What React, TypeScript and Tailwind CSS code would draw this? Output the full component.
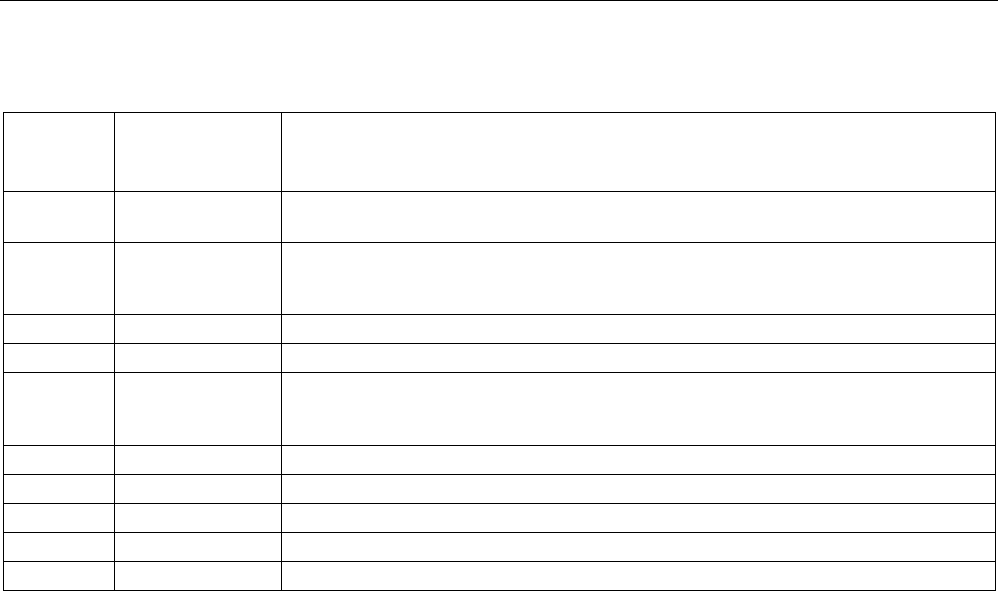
import React from "react";

const rowHeights = ["h-[79px]", "h-[51px]", "h-[72px]", "h-[29px]", "h-[29px]", "h-[73px]", "h-[29px]", "h-[29px]", "h-[29px]", "h-[29px]", "h-[29px]"];

const App = () => {
  return (
    <div className="min-h-[591px] bg-white border-t border-black pt-[111px] font-['Liberation_Sans',sans-serif]">
      <div className="ml-[3px] w-[993px] border-l border-t border-black">
        {rowHeights.map((h, i) => (
          <div key={i} className={`grid grid-cols-[111px_167px_1fr] ${h}`}>
            <div className="border-r border-b border-black"></div>
            <div className="border-r border-b border-black"></div>
            <div className="border-r border-b border-black"></div>
          </div>
        ))}
      </div>
    </div>
  );
};

export default App;
